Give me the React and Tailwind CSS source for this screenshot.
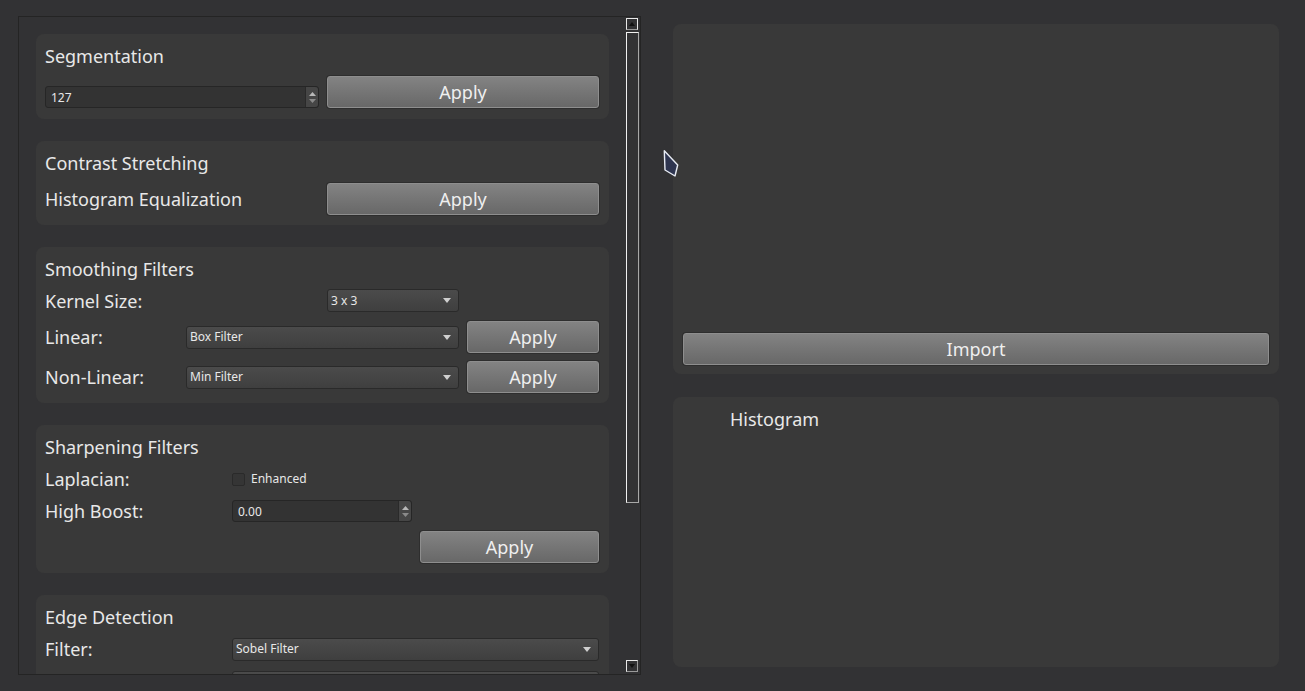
import React from 'react';

const font = { fontFamily: '"Noto Sans", "Open Sans", sans-serif' };

function Card({ className = '', children }) {
  return <div className={`bg-[#393939] rounded-[8px] ${className}`}>{children}</div>;
}

function Title({ children }) {
  return <div className="h-[24px] leading-[24px] text-[18px] text-[#e8e8e8]">{children}</div>;
}

function Label({ children, className = '' }) {
  return <div className={`text-[18px] leading-[24px] text-[#e8e8e8] ${className}`}>{children}</div>;
}

function Button({ children, className = '' }) {
  return (
    <button className={`h-[32px] rounded-[3px] border border-[#8e8e8e] bg-gradient-to-b from-[#838383] to-[#686868] text-[18px] leading-none text-[#efefef] shadow-[0_0_0_1px_#2e2e2e] ${className}`}>
      {children}
    </button>
  );
}

function Combo({ value, className = '' }) {
  return (
    <div className={`h-[23px] rounded-[3px] border border-[#2a2a2a] bg-gradient-to-b from-[#4b4b4b] to-[#3f3f3f] flex items-center justify-between pl-[3px] pr-[7px] ${className}`}>
      <span className="text-[12px] text-[#e8e8e8]">{value}</span>
      <svg width="8" height="5" viewBox="0 0 8 5"><path d="M0 0h8L4 5z" fill="#cfcfcf" /></svg>
    </div>
  );
}

function SpinBox({ value, className = '' }) {
  return (
    <div className={`h-[22px] rounded-[3px] border border-[#262626] bg-[#333333] flex ${className}`}>
      <span className="flex-1 pl-[5px] text-[12px] leading-[21px] text-[#e8e8e8]">{value}</span>
      <div className="w-[13px] bg-[#464646] border-l border-[#2a2a2a] rounded-r-[3px] flex flex-col items-center justify-center gap-[3px]">
        <svg width="7" height="4" viewBox="0 0 7 4"><path d="M0 4h7L3.5 0z" fill="#b8b8b8" /></svg>
        <svg width="7" height="4" viewBox="0 0 7 4"><path d="M0 0h7L3.5 4z" fill="#8a8a8a" /></svg>
      </div>
    </div>
  );
}

function Scrollbar() {
  return (
    <div className="w-[14px] flex flex-col pt-[1px] pb-[2px]">
      <div className="w-[12px] h-[12px] border border-[#e8e8e8] border-b-[#9a9a9a] flex items-center justify-center">
        <svg width="6" height="4" viewBox="0 0 6 4"><path d="M0 4h6L3 0z" fill="#111" /></svg>
      </div>
      <div className="mt-[2px] w-[13px] h-[471px] border border-[#f0f0f0] border-r-[#a8a8a8] border-b-[#a8a8a8]" />
      <div className="flex-1" />
      <div className="w-[12px] h-[12px] border border-[#e8e8e8] border-r-[#9a9a9a] border-b-[#9a9a9a] flex items-center justify-center">
        <svg width="6" height="4" viewBox="0 0 6 4"><path d="M0 0h6L3 4z" fill="#111" /></svg>
      </div>
    </div>
  );
}

export default function App() {
  return (
    <div className="w-[1305px] h-[691px] bg-[#323234] relative flex items-start overflow-hidden" style={font}>
      {/* left scroll area */}
      <div className="ml-[18px] mt-[16px] w-[623px] h-[659px] border border-[#242424] flex">
        <div className="flex-1 overflow-hidden pl-[17px] pt-[17px]">
          <div className="w-[573px] flex flex-col gap-[22px]">
            <Card className="pt-[10px] pb-[11px] pl-[9px] pr-[10px]">
              <Title>Segmentation</Title>
              <div className="mt-[8px] flex items-end gap-[8px]">
                <SpinBox value="127" className="w-[274px]" />
                <Button className="w-[272px]">Apply</Button>
              </div>
            </Card>

            <Card className="pt-[10px] pb-[10px] pl-[9px] pr-[10px]">
              <Title>Contrast Stretching</Title>
              <div className="mt-[8px] flex items-center justify-between">
                <Label>Histogram Equalization</Label>
                <Button className="w-[272px]">Apply</Button>
              </div>
            </Card>

            <Card className="pt-[10px] pb-[10px] pl-[9px] pr-[10px]">
              <Title>Smoothing Filters</Title>
              <div className="mt-[8px] flex items-center h-[23px]">
                <Label className="w-[282px]">Kernel Size:</Label>
                <Combo value="3 x 3" className="w-[132px]" />
              </div>
              <div className="mt-[9px] flex items-center">
                <Label className="w-[141px]">Linear:</Label>
                <Combo value="Box Filter" className="w-[273px]" />
                <Button className="ml-[8px] w-[132px]">Apply</Button>
              </div>
              <div className="mt-[8px] flex items-center">
                <Label className="w-[141px]">Non-Linear:</Label>
                <Combo value="Min Filter" className="w-[273px]" />
                <Button className="ml-[8px] w-[132px]">Apply</Button>
              </div>
            </Card>

            <Card className="pt-[10px] pb-[10px] pl-[9px] pr-[10px]">
              <Title>Sharpening Filters</Title>
              <div className="mt-[8px] flex items-center h-[24px]">
                <Label className="w-[187px]">Laplacian:</Label>
                <div className="w-[13px] h-[13px] rounded-[2px] border border-[#2a2a2a] bg-[#353535]" />
                <span className="ml-[6px] text-[12px] text-[#e8e8e8]">Enhanced</span>
              </div>
              <div className="mt-[8px] flex items-center h-[24px]">
                <Label className="w-[187px]">High Boost:</Label>
                <SpinBox value="0.00" className="w-[180px]" />
              </div>
              <div className="mt-[8px] flex justify-end">
                <Button className="w-[179px]">Apply</Button>
              </div>
            </Card>

            <Card className="pt-[10px] pb-[10px] pl-[9px] pr-[10px]">
              <Title>Edge Detection</Title>
              <div className="mt-[8px] flex items-center">
                <Label className="w-[187px]">Filter:</Label>
                <Combo value="Sobel Filter" className="flex-1" />
              </div>
              <div className="mt-[9px] flex items-center">
                <Label className="w-[187px]">&nbsp;</Label>
                <Combo value="" className="flex-1" />
              </div>
            </Card>
          </div>
        </div>
        <Scrollbar />
      </div>

      {/* right column */}
      <div className="ml-[32px] mt-[24px] w-[606px] flex flex-col gap-[23px]">
        <Card className="h-[350px] flex flex-col justify-end px-[10px] pb-[9px]">
          <Button className="w-full">Import</Button>
        </Card>
        <Card className="h-[270px] pl-[57px] pt-[10px]">
          <Title>Histogram</Title>
        </Card>
      </div>

      {/* mouse cursor */}
      <svg className="absolute left-[660px] top-[147px]" width="24" height="34" viewBox="0 0 24 34">
        <path d="M4.3 3.7 L5 23 L15 29 L17.7 18 Z" fill="#2e3550" stroke="#e8ecf4" strokeWidth="1.4" strokeLinejoin="round" />
      </svg>
    </div>
  );
}
